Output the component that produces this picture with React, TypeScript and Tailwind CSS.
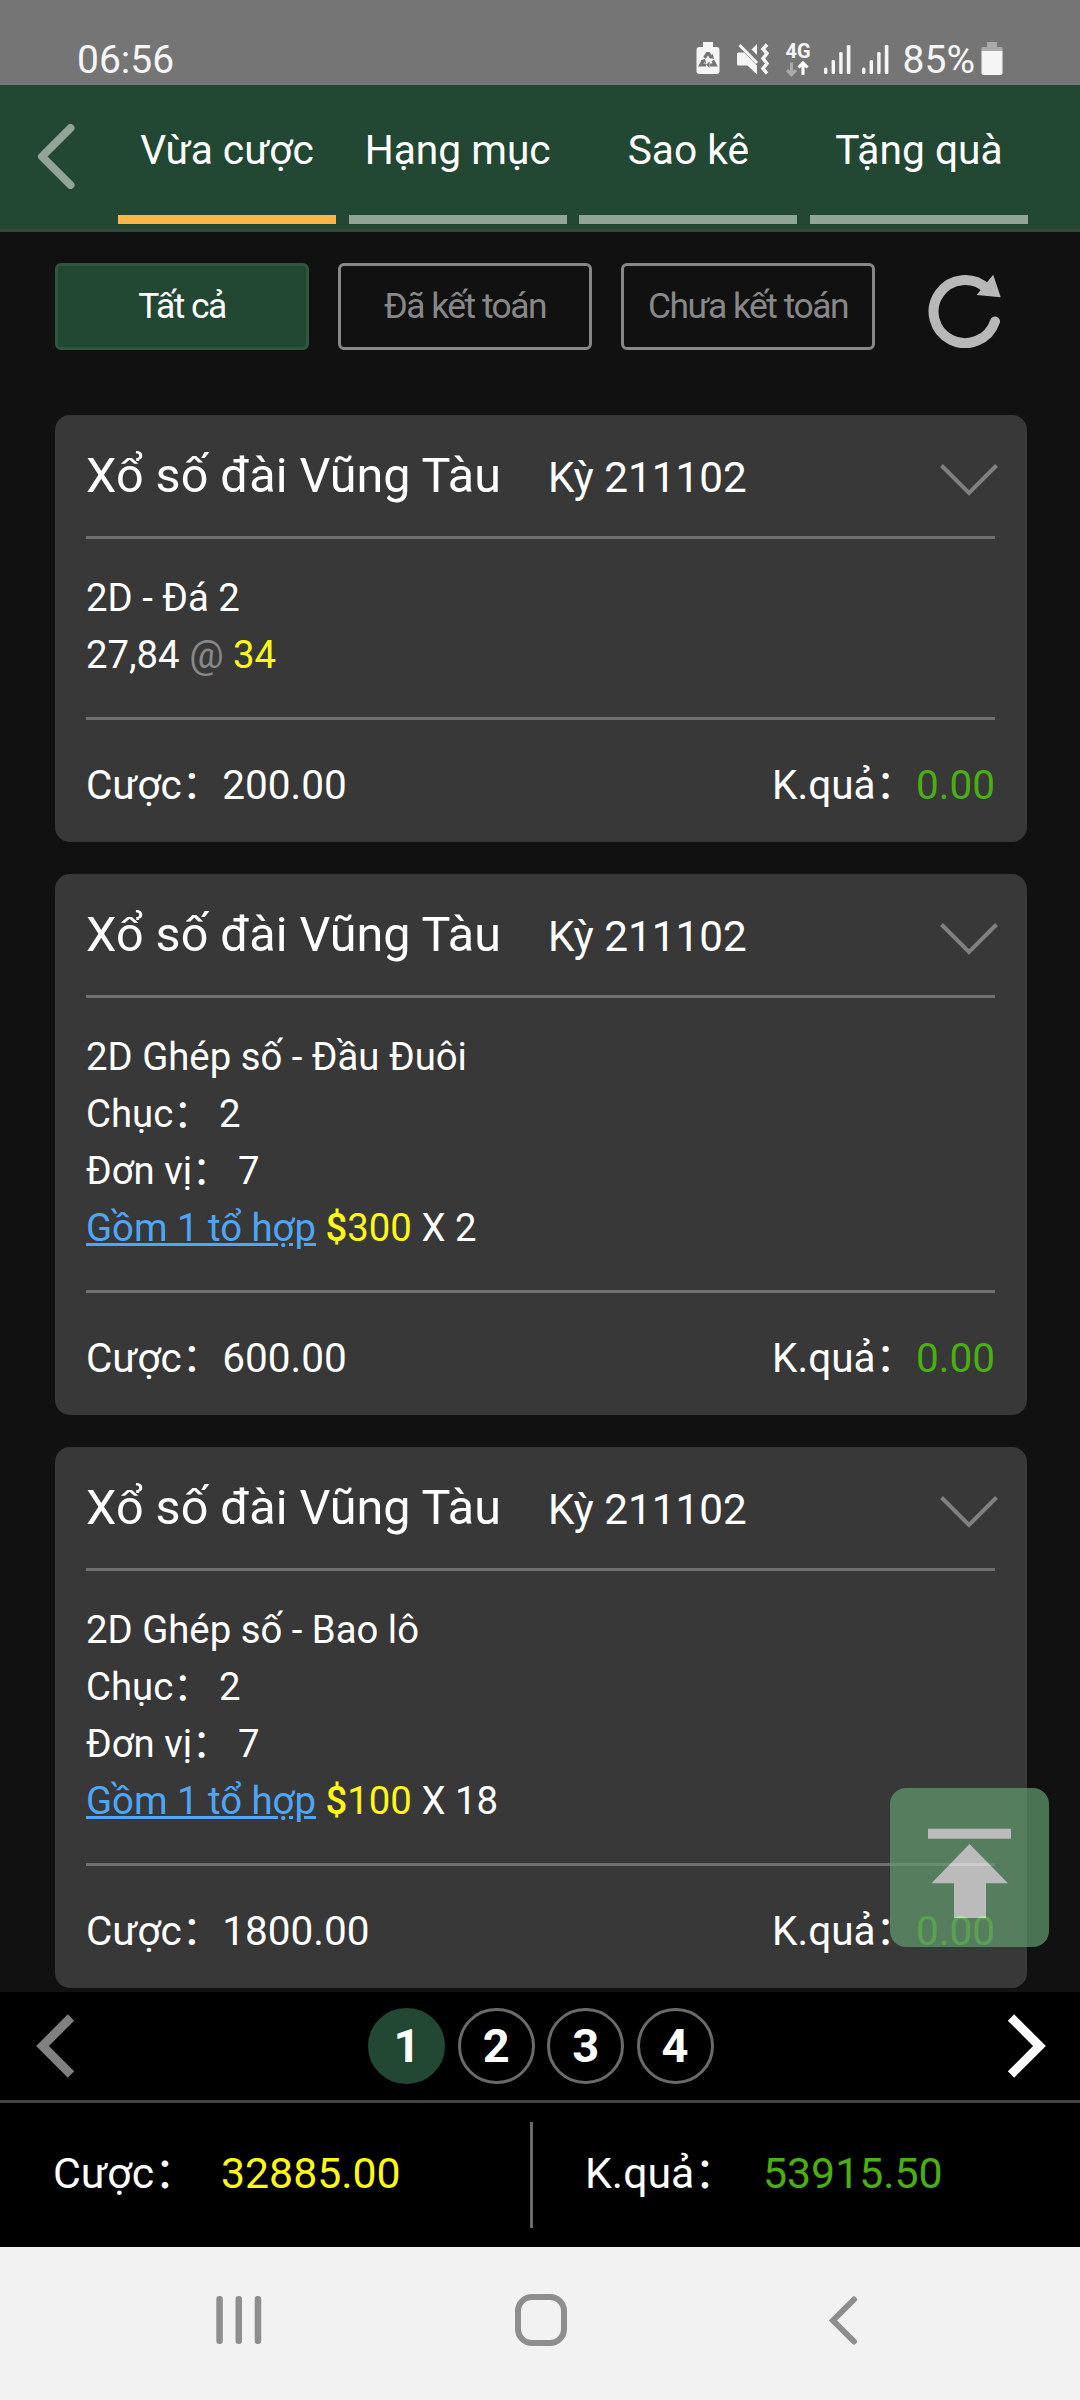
import React, { useState } from 'react';
import clsx from 'clsx';

interface Bet {
  id: number;
  game: string;
  kind: string;
  lines: React.ReactNode[];
  stake: string;
}

const TABS = ['Vừa cược', 'Hạng mục', 'Sao kê', 'Tặng quà'];
const FILTERS = ['Tất cả', 'Đã kết toán', 'Chưa kết toán'];
const PAGES = [1, 2, 3, 4];

const comboLines = (amount: number, times: number) => [
  <>
    Chục：<span className="-ml-0.5">&nbsp;2</span>
  </>,
  <>
    Đơn vị：<span className="-ml-0.5">&nbsp;7</span>
  </>,
  <>
    <a className="text-[#4ea6f5] underline">Gồm 1 tổ hợp</a>{' '}
    <span className="text-[#fff714]">
      <b className="font-medium">$</b>
      {amount}
    </span>{' '}
    X {times}
  </>,
];

const BETS: Bet[] = [
  {
    id: 1,
    game: 'Xổ số đài Vũng Tàu',
    kind: '2D - Đá 2',
    lines: [
      <>
        27,84 <span className="text-[#888888]">@</span> <span className="text-[#fff714]">34</span>
      </>,
    ],
    stake: '200.00',
  },
  { id: 2, game: 'Xổ số đài Vũng Tàu', kind: '2D Ghép số - Đầu Đuôi', lines: comboLines(300, 2), stake: '600.00' },
  { id: 3, game: 'Xổ số đài Vũng Tàu', kind: '2D Ghép số - Bao lô', lines: comboLines(100, 18), stake: '1800.00' },
];

const SignalBars = () => (
  <svg width="27" height="32" viewBox="0 0 27 32" fill="#f5f5f5">
    <rect x="0" y="24.5" width="3.4" height="6.5" rx="1.5" />
    <rect x="7.6" y="17" width="3.4" height="14" rx="1.2" />
    <rect x="15.2" y="9" width="3.4" height="22" rx="1.2" />
    <rect x="22.8" y="2" width="3.6" height="29" rx="1.2" />
  </svg>
);

const StatusBar = () => (
  <div className="flex h-[85px] items-end justify-between bg-[#757575] pr-[77px] pl-[77px] text-[#f5f5f5]">
    <span className="mb-[2px] text-[39px] leading-[46px]">06:56</span>
    <div className="flex h-[45px] items-start">
      <svg className="mt-0.5 mr-[17px]" width="24" height="33" viewBox="0 0 24 33">
        <path d="M7 0h10v5h3.500q3 0 3 3v21q0 3-3 3h-17q-3 0-3-3v-21q0-3 3-3h3.500z" fill="#f5f5f5" />
        <g fill="none" stroke="#757575" strokeWidth="3.200">
          <path d="M8.500 15.800l2.700-4.200h1.600l2.700 4.200" />
          <path d="M7.200 18.500l-2.400 4.500h5.200" />
          <path d="M16.800 18.500l2.400 4.500h-5.200" />
        </g>
        <path d="M4.500 18.500l4.500-1.800 1.200 4.500zM16.800 12l1.200 5-4.800-1.200zM13.500 19.500v6.500l-3.500-3.200z" fill="#757575" />
      </svg>
      <svg className="mt-[3px] mr-[17px]" width="32" height="33" viewBox="0 0 32 33" fill="#f5f5f5">
        <path d="M0 11q0-1.500 1.500-1.500h5.500l13 13v9l-9.500-9h-9q-1.500 0-1.500-1.500zM20 1v11l-5.500-5.500z" />
        <path d="M2.500 2l17.500 18" fill="none" stroke="#f5f5f5" strokeWidth="3" />
        <path d="M30 1.500l-4 4.500 4 4.500-4 5 4 5-4 5 4 5" fill="none" stroke="#f5f5f5" strokeWidth="3.500" />
      </svg>
      <div className="mt-[3px] mr-[14px] flex w-6 flex-col">
        <span className="text-[20px] leading-[16px] font-bold">4G</span>
        <svg className="mt-px" width="24" height="18" viewBox="0 0 24 18" fill="none" strokeWidth="3">
          <path d="M5.500 2.500v12M1 10l4.500 4.800L10 10" stroke="#aaaaaa" />
          <path d="M17 15V4M12.500 7.500L17 2.800l4.500 4.700" stroke="#ffffff" />
        </svg>
      </div>
      <div className="mt-[3px] flex gap-[11px]">
        <SignalBars />
        <SignalBars />
      </div>
      <span className="-mt-[3px] ml-[14px] text-[39px] leading-[46px]">85%</span>
      <svg className="mt-0.5 ml-1.5" width="22" height="33" viewBox="0 0 22 33">
        <path d="M6 0h10v5h5q.5 0 .5.5V9H.5V5.500Q.5 5 1 5h5z" fill="#a8a8a8" />
        <path d="M.5 9h21v22q0 2-2 2h-17q-2 0-2-2z" fill="#f5f5f5" />
      </svg>
    </div>
  </div>
);

const BetCard: React.FC<{ bet: Bet }> = ({ bet }) => (
  <div className="rounded-[15px] bg-[#383838] pr-8 pl-[31px]">
    <div className="flex h-[124px] items-center justify-between border-b-3 border-[#707070]">
      <div className="flex items-baseline pt-1">
        <span className="w-[462px] text-[48.500px] leading-[60px]">{bet.game}</span>
        <span className="text-[42.300px]">Kỳ 211102</span>
      </div>
      <svg className="mt-2 -mr-[3px]" width="58" height="32" viewBox="0 0 58 32" fill="none" stroke="#808080" strokeWidth="4">
        <path d="M1.500 1.500L29 29 56.500 1.500" />
      </svg>
    </div>
    <div className="border-b-3 border-[#707070] pt-[30px] pb-[34px] text-[38.300px] leading-[57px]">
      <p>{bet.kind}</p>
      {bet.lines.map((line, i) => (
        <p key={i}>{line}</p>
      ))}
    </div>
    <div className="flex h-[122px] justify-between pt-[37px] text-[40.500px] leading-[57px]">
      <span>Cược：{bet.stake}</span>
      <span>
        K.quả：<span className="text-[#49b010]">0.00</span>
      </span>
    </div>
  </div>
);

export default function App() {
  const [tab, setTab] = useState(0);
  const [filter, setFilter] = useState(0);
  const [page, setPage] = useState(1);

  return (
    <div className="relative flex h-[2400px] w-[1080px] flex-col overflow-hidden bg-[#111111] font-[Roboto,'Noto_Sans_CJK_SC',sans-serif] text-white">
      <StatusBar />

      {/* Header tabs */}
      <header className="flex h-[147px] border-b-3 border-[#39463f] bg-[#224733] pl-[38px]">
        <svg className="mt-[39px] mr-[43px]" width="37" height="65" viewBox="0 0 37 65" fill="none" stroke="#90a497" strokeWidth="8" strokeLinecap="round" strokeLinejoin="round">
          <path d="M32.500 4L4 32.500 32.500 61" />
        </svg>
        <nav className="grid w-[910px] grid-cols-4 gap-[12.600px]">
          {TABS.map((name, i) => (
            <button
              key={name}
              onClick={() => setTab(i)}
              className={clsx('mb-[5px] flex justify-center border-b-9 pt-[37px] text-[40.700px] leading-[57px]', i === tab ? 'border-[#feb548]' : 'border-[#90a497]')}
            >
              {name}
            </button>
          ))}
        </nav>
      </header>

      {/* Filters */}
      <div className="flex h-[183px] items-start gap-[29px] pt-[31px] pl-[55px]">
        {FILTERS.map((name, i) => (
          <button
            key={name}
            onClick={() => setFilter(i)}
            className={clsx(
              'h-[87px] w-[254px] rounded-md border-3 pt-px text-[35.400px] tracking-[-1.500px]',
              i === filter ? 'border-[#2e5640] bg-[#224733] text-white' : 'border-[#888888] text-[#888888]',
            )}
          >
            {name}
          </button>
        ))}
        <svg className="mt-[11px] ml-6" width="74" height="74" viewBox="0 0 74 74">
          <path d="M67 47.500A31.500 31.500 0 1 1 59 15" fill="none" stroke="#b8b8b8" strokeWidth="10" strokeLinecap="round" />
          <path d="M65.200.7L72.700 23.300 48.600 21z" fill="#b8b8b8" />
        </svg>
      </div>

      {/* Bet list */}
      <main className="flex h-[1577px] shrink-0 flex-col gap-8 overflow-hidden pr-[53px] pl-[55px]">
        {BETS.map((bet) => (
          <BetCard key={bet.id} bet={bet} />
        ))}
      </main>

      {/* Pager */}
      <div className="flex h-[111px] items-center justify-between border-b-3 border-[#444444] bg-black pr-[34px] pl-9">
        <svg width="39" height="64" viewBox="0 0 39 64" fill="none" stroke="#808080" strokeWidth="9">
          <path d="M35 3.500L6.500 32 35 60.500" />
        </svg>
        <div className="flex gap-[12.400px]">
          {PAGES.map((n) => (
            <button
              key={n}
              onClick={() => setPage(n)}
              className={clsx(
                'flex h-[76px] w-[77px] items-center justify-center rounded-full border-3 text-[47px] font-bold',
                n === page ? 'border-[#224733] bg-[#224733]' : 'border-[#6a6a6a]',
              )}
            >
              {n}
            </button>
          ))}
        </div>
        <svg width="39" height="64" viewBox="0 0 39 64" fill="none" stroke="#ffffff" strokeWidth="9">
          <path d="M4 3.500L32.500 32 4 60.500" />
        </svg>
      </div>

      {/* Totals */}
      <div className="flex h-36 items-center bg-black text-[42.800px] leading-[50px]">
        <div className="flex w-[530px] pb-[5px] pl-[53px]">
          <span className="w-[168px]">Cược：</span>
          <span className="text-[#fff714]">32885.00</span>
        </div>
        <div className="h-[106px] w-[3px] bg-[#6a6a6a]" />
        <div className="flex pb-[5px] pl-[52px]">
          <span className="w-[178px]">K.quả：</span>
          <span className="text-[#49b010]">53915.50</span>
        </div>
      </div>

      {/* Android navigation */}
      <div className="flex h-[153px] items-center bg-[#f2f2f2] pb-[7px] pl-[216px]">
        <svg width="46" height="48" viewBox="0 0 46 48" fill="#8e8e8e">
          <rect x="0.300" width="6.500" height="48" rx="3" />
          <rect x="19.500" width="6.500" height="48" rx="3" />
          <rect x="38.700" width="6.500" height="48" rx="3" />
        </svg>
        <div className="ml-[253px] h-[52px] w-[52px] rounded-[17px] border-[6.500px] border-[#8e8e8e]" />
        <svg className="ml-[262px]" width="29" height="49" viewBox="0 0 29 49" fill="none" stroke="#8e8e8e" strokeWidth="6" strokeLinecap="round">
          <path d="M25 3.500L4 24.500 25 45.500" />
        </svg>
      </div>

      {/* Scroll to top */}
      <button className="absolute top-[1788px] left-[890px] flex size-[159px] justify-center rounded-2xl bg-[#639c6f] pt-10 opacity-70">
        <svg width="84" height="91" viewBox="0 0 84 91" fill="#f3f3f3">
          <path d="M0 .7h83v10H0zM41.500 16L80 55.300H58V90H26V55.300H3.500z" />
        </svg>
      </button>
    </div>
  );
}
